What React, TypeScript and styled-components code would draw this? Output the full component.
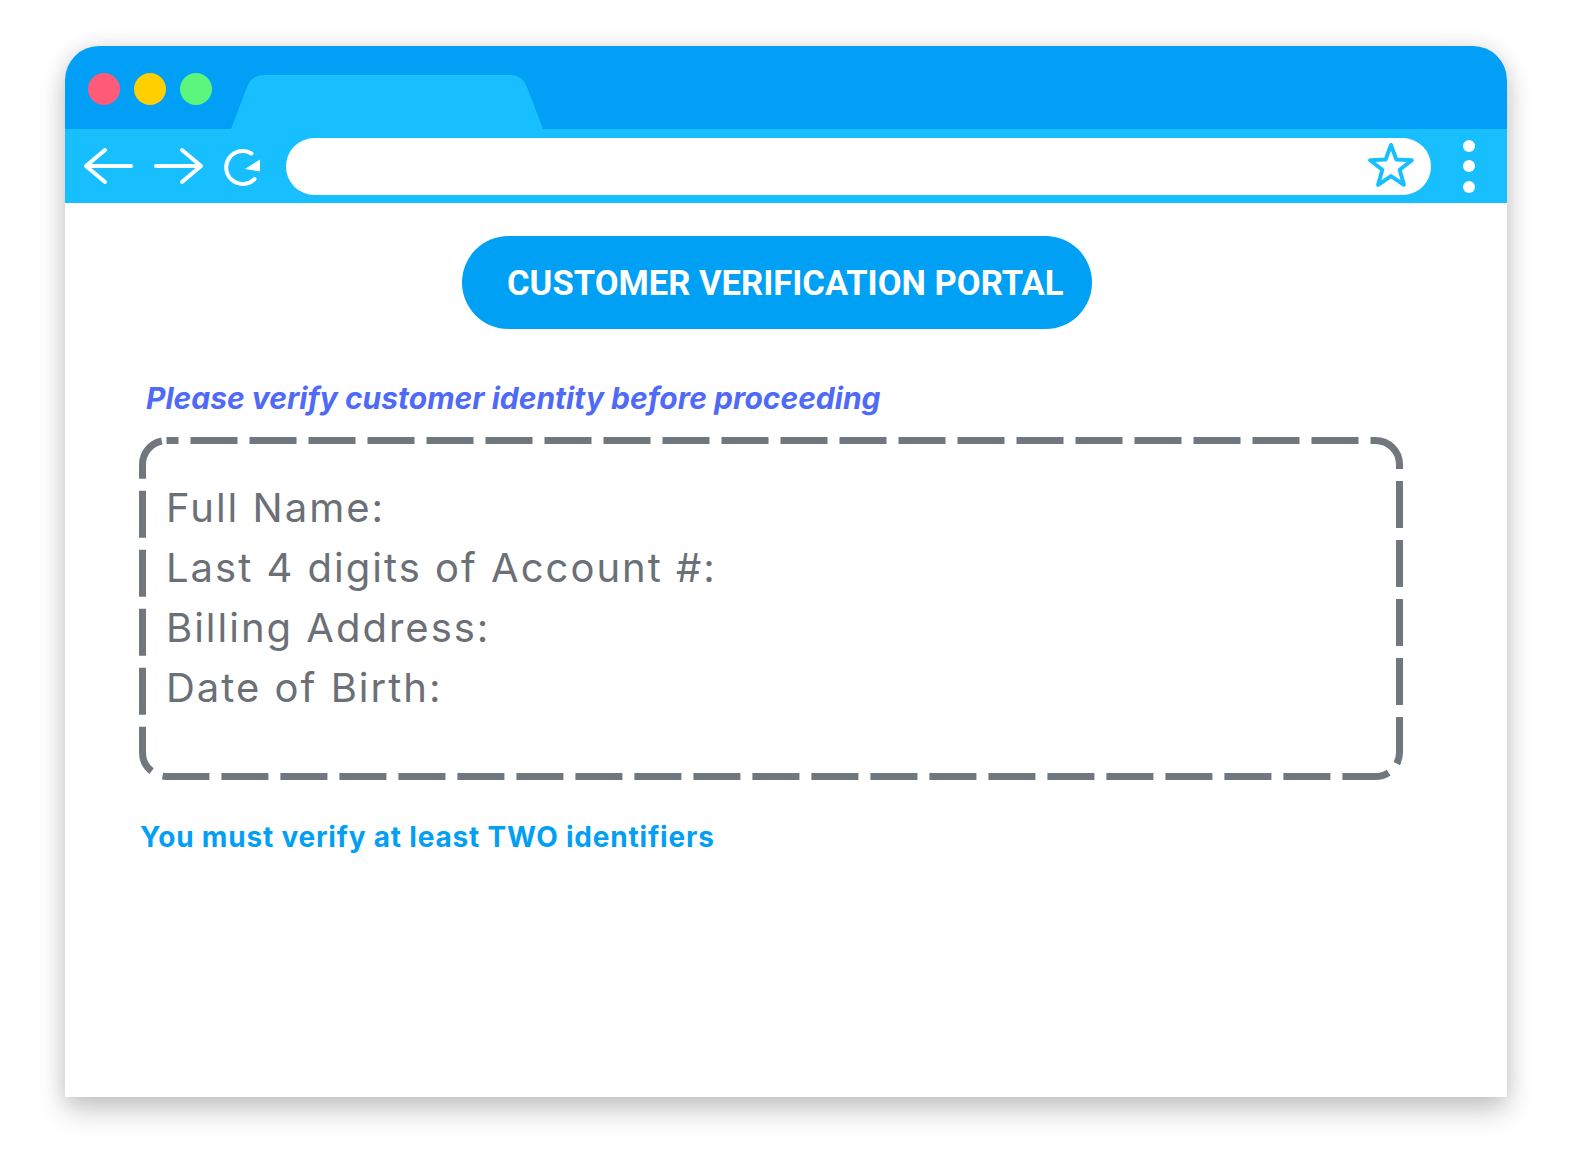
import styled, { createGlobalStyle } from 'styled-components';

const GlobalStyle = createGlobalStyle`
  html, body {
    margin: 0;
    padding: 0;
    background: #ffffff;
  }
  * {
    box-sizing: border-box;
  }
`;

const fields = ['Full Name:', 'Last 4 digits of Account #:', 'Billing Address:', 'Date of Birth:'];

export default function App() {
  return (
    <>
      <GlobalStyle />
      <Page>
        <Window>
          <TitleBar>
            <Lights>
              <Light color="#ff5a78" />
              <Light color="#ffd000" />
              <Light color="#5cf67c" />
            </Lights>
            <Tab width="312" height="54" viewBox="0 0 312 54">
              <path d="M0 54 L16 12 Q20.5 0 33 0 L279 0 Q291.5 0 296 12 L312 54 Z" fill="#17bffe" />
            </Tab>
          </TitleBar>

          <Toolbar>
            <NavIcon width="50" height="50" viewBox="0 0 50 50">
              <path d="M48 25 H3 M22 9 L3 25 L22 41" />
            </NavIcon>
            <NavIcon width="50" height="50" viewBox="0 0 50 50" style={{ marginLeft: 21 }}>
              <path d="M2 25 H47 M28 9 L47 25 L28 41" />
            </NavIcon>
            <ReloadIcon width="42" height="50" viewBox="0 0 42 50">
              <path d="M31.5 38 A16.5 16.5 0 1 1 28.5 12.5" />
              <path d="M22 28 L37 18.5 L37 30.5 Z" fill="#ffffff" stroke="none" />
            </ReloadIcon>
            <UrlBar>
              <svg width="48" height="48" viewBox="0 0 48 48">
                <path
                  d="M24 3 L29.4 17.6 L44.9 18.2 L32.7 27.8 L36.9 42.8 L24 34.1 L11.1 42.8 L15.3 27.8 L3.1 18.2 L18.6 17.6 Z"
                  fill="none"
                  stroke="#17bffe"
                  strokeWidth="4"
                  strokeLinejoin="round"
                />
              </svg>
            </UrlBar>
            <Kebab>
              <Dot />
              <Dot />
              <Dot />
            </Kebab>
          </Toolbar>

          <Content>
            <PortalPill>CUSTOMER VERIFICATION PORTAL</PortalPill>
            <Notice>Please verify customer identity before proceeding</Notice>
            <FieldBox>
              <DashFrame width="100%" height="100%">
                <rect
                  x="3.5"
                  y="3.5"
                  width="calc(100% - 7px)"
                  height="calc(100% - 7px)"
                  rx="24"
                  fill="none"
                  stroke="#72767d"
                  strokeWidth="7"
                  strokeDasharray="47 12"
                  strokeDashoffset="-24"
                />
              </DashFrame>
              {fields.map(f => (
                <Field key={f}>{f}</Field>
              ))}
            </FieldBox>
            <Rule>You must verify at least TWO identifiers</Rule>
          </Content>
        </Window>
      </Page>
    </>
  );
}

const Page = styled.div`
  width: 1576px;
  height: 1152px;
  padding: 46px 0 0 65px;
  overflow: hidden;
`;

const Window = styled.div`
  width: 1442px;
  height: 1051px;
  display: flex;
  flex-direction: column;
  background: #ffffff;
  border-radius: 34px 34px 0 0;
  overflow: hidden;
  box-shadow: 0 14px 28px rgba(0, 0, 0, 0.2), 0 0 22px rgba(0, 0, 0, 0.1);
`;

const TitleBar = styled.div`
  height: 83px;
  flex-shrink: 0;
  display: flex;
  align-items: flex-end;
  padding-left: 23px;
  background: #01a0f6;
`;

const Lights = styled.div`
  align-self: flex-start;
  margin-top: 27px;
  display: flex;
  gap: 14px;
`;

const Light = styled.span<{ color: string }>`
  width: 32px;
  height: 32px;
  border-radius: 50%;
  background: ${p => p.color};
`;

const Tab = styled.svg`
  display: block;
  margin-left: 19px;
`;

const Toolbar = styled.div`
  height: 74px;
  flex-shrink: 0;
  display: flex;
  align-items: center;
  padding-left: 18px;
  background: #17bffe;
`;

const NavIcon = styled.svg`
  display: block;
  flex-shrink: 0;
  fill: none;
  stroke: #ffffff;
  stroke-width: 4;
  stroke-linecap: round;
  stroke-linejoin: round;
`;

const ReloadIcon = styled(NavIcon)`
  margin-left: 19px;
`;

const UrlBar = styled.div`
  flex: 1;
  height: 57px;
  margin-left: 21px;
  display: flex;
  align-items: center;
  justify-content: flex-end;
  padding-right: 16px;
  border-radius: 29px;
  background: #ffffff;

  svg {
    display: block;
  }
`;

const Kebab = styled.div`
  width: 76px;
  display: flex;
  flex-direction: column;
  align-items: center;
  gap: 8.5px;
`;

const Dot = styled.span`
  width: 12px;
  height: 12px;
  border-radius: 50%;
  background: #ffffff;
`;

const Content = styled.div`
  display: flex;
  flex-direction: column;
  padding: 33px 0 0 74px;
  font-family: Inter, 'Noto Sans', sans-serif;
`;

const PortalPill = styled.div`
  align-self: center;
  margin-left: -74px;
  margin-right: 18px;
  width: 630px;
  height: 93px;
  display: flex;
  align-items: center;
  padding-left: 45px;
  border-radius: 47px;
  background: #00a0f5;
  color: #ffffff;
  font-family: Roboto, 'Liberation Sans', sans-serif;
  font-weight: 700;
  font-size: 34.6px;
  white-space: nowrap;
`;

const Notice = styled.div`
  margin: 49px 0 0 7px;
  color: #4f6af7;
  font-size: 30px;
  font-weight: 700;
  font-style: italic;
  line-height: 40px;
  letter-spacing: 0;
`;

const FieldBox = styled.div`
  position: relative;
  width: 1264px;
  height: 343px;
  margin-top: 19px;
  padding: 41px 0 0 27px;
`;

const DashFrame = styled.svg`
  position: absolute;
  inset: 0;
  pointer-events: none;
`;

const Field = styled.div`
  color: #6b6f76;
  font-size: 40px;
  font-weight: 400;
  line-height: 60px;
  letter-spacing: 2px;
  white-space: nowrap;
`;

const Rule = styled.div`
  margin: 37px 0 0 1px;
  color: #039ff5;
  font-size: 28px;
  font-weight: 700;
  line-height: 40px;
  letter-spacing: 0.8px;
`;
